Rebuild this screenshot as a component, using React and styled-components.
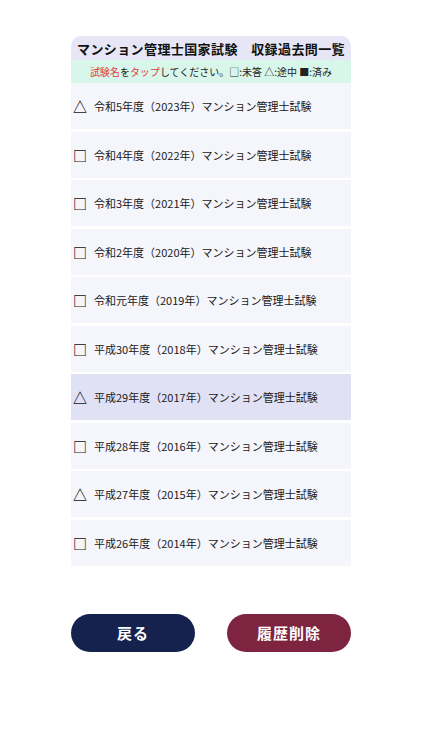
import React from 'react';
import styled, { createGlobalStyle } from 'styled-components';

const GlobalStyle = createGlobalStyle`
  html, body {
    margin: 0;
    padding: 0;
    background: #ffffff;
    font-family: "Noto Sans CJK JP", "Noto Sans", sans-serif;
  }
`;

const Page = styled.div`
  width: 422px;
  min-height: 750px;
  display: flex;
  flex-direction: column;
  align-items: center;
  padding-top: 36px;
  box-sizing: border-box;
`;

const Panel = styled.div`
  width: 280px;
  border-radius: 10px 10px 0 0;
  overflow: hidden;
`;

const Title = styled.div`
  height: 24px;
  background: #e6e6f6;
  color: #111111;
  font-size: 13px;
  font-weight: 700;
  letter-spacing: 0.4px;
  display: flex;
  align-items: center;
  justify-content: center;
  white-space: pre;
`;

const Hint = styled.div`
  height: 23px;
  background: #d8f6ea;
  color: #222222;
  font-size: 10px;
  display: flex;
  align-items: center;
  justify-content: center;
  white-space: pre;
`;

const Red = styled.span`
  color: #e23a3a;
`;

const List = styled.div`
  display: flex;
  flex-direction: column;
  gap: 2.5px;
`;

const Row = styled.div`
  height: 46px;
  background: ${p => (p.$active ? '#e1e1f6' : '#f5f5fc')};
  display: flex;
  align-items: center;
  padding-left: 2px;
  font-size: 11px;
  color: #1a1a1a;
`;

const Mark = styled.span`
  width: 14px;
  margin-right: 7px;
  font-size: 14px;
  font-weight: 700;
  line-height: 1;
  text-align: center;
  color: #111111;
`;

const Buttons = styled.div`
  width: 280px;
  display: flex;
  justify-content: space-between;
  margin-top: 48px;
`;

const Button = styled.button`
  width: 124px;
  height: 38px;
  border: none;
  border-radius: 19px;
  background: ${p => p.$bg};
  color: #ffffff;
  font-family: "Noto Sans CJK JP", sans-serif;
  font-size: 15px;
  font-weight: 700;
  letter-spacing: 1px;
  cursor: pointer;
`;

const exams = [
  { mark: '△', label: '令和5年度（2023年）マンション管理士試験' },
  { mark: '□', label: '令和4年度（2022年）マンション管理士試験' },
  { mark: '□', label: '令和3年度（2021年）マンション管理士試験' },
  { mark: '□', label: '令和2年度（2020年）マンション管理士試験' },
  { mark: '□', label: '令和元年度（2019年）マンション管理士試験' },
  { mark: '□', label: '平成30年度（2018年）マンション管理士試験' },
  { mark: '△', label: '平成29年度（2017年）マンション管理士試験', active: true },
  { mark: '□', label: '平成28年度（2016年）マンション管理士試験' },
  { mark: '△', label: '平成27年度（2015年）マンション管理士試験' },
  { mark: '□', label: '平成26年度（2014年）マンション管理士試験' },
];

const App = () => {
  return (
    <Page>
      <GlobalStyle />
      <Panel>
        <Title>マンション管理士国家試験　収録過去問一覧</Title>
        <Hint>
          <Red>試験名</Red>を<Red>タップ</Red>してください。□:未答 △:途中 ■:済み
        </Hint>
        <List>
          {exams.map(e => (
            <Row key={e.label} $active={e.active}>
              <Mark>{e.mark}</Mark>
              {e.label}
            </Row>
          ))}
        </List>
      </Panel>
      <Buttons>
        <Button $bg="#15224e">戻る</Button>
        <Button $bg="#7f2440">履歴削除</Button>
      </Buttons>
    </Page>
  );
};

export default App;
